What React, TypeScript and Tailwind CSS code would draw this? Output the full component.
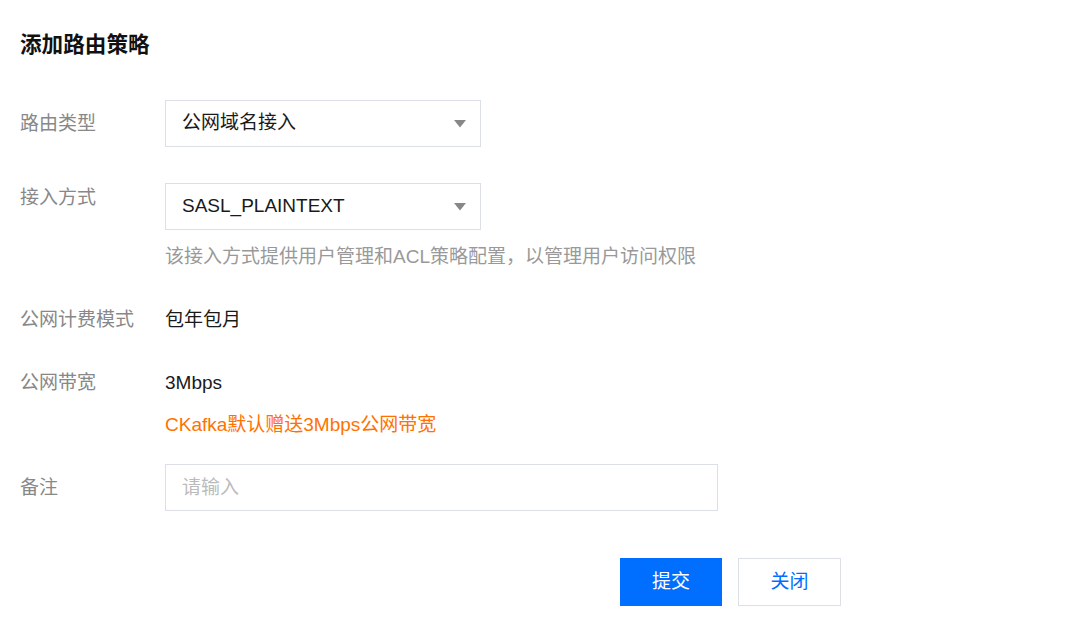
import { FC, ReactNode } from 'react';

const font = { fontFamily: '"Liberation Sans", "Noto Sans CJK SC", sans-serif' };

interface RowProps {
  label: string;
  labelClass: string;
  className?: string;
  children: ReactNode;
}

const Row: FC<RowProps> = ({ label, labelClass, className = '', children }) => (
  <div className={`flex items-start ${className}`}>
    <div className={`w-[145px] shrink-0 text-[19px] text-[#888888] ${labelClass}`}>{label}</div>
    <div className="flex flex-col">{children}</div>
  </div>
);

const Caret: FC = () => (
  <svg width="12" height="8" viewBox="0 0 12 8" className="shrink-0">
    <polygon points="0,0 12,0 6,7.5" fill="#888888" />
  </svg>
);

const SelectBox: FC<{ value: string }> = ({ value }) => (
  <div className="flex h-[47px] w-[316px] items-center justify-between border border-[#dcdfe6] bg-white pl-[16px] pr-[14px]">
    <span className="text-[19px] text-[#1a1a1a]">{value}</span>
    <Caret />
  </div>
);

export default function App() {
  return (
    <div className="min-h-[629px] w-[1080px] bg-white pl-[20px]" style={font}>
      <div className="pt-[30px]">
        <h2 className="text-[21.6px] font-bold leading-[30px] text-[#111111]">添加路由策略</h2>
      </div>

      <Row label="路由类型" labelClass="leading-[47px]" className="mt-[40px]">
        <SelectBox value="公网域名接入" />
      </Row>

      <Row label="接入方式" labelClass="leading-[30px]" className="mt-[36px]">
        <SelectBox value="SASL_PLAINTEXT" />
        <p className="mt-[12px] text-[19px] leading-[30px] text-[#999999]">
          该接入方式提供用户管理和ACL策略配置，以管理用户访问权限
        </p>
      </Row>

      <Row label="公网计费模式" labelClass="leading-[30px]" className="mt-[33px]">
        <span className="text-[19px] leading-[30px] text-[#1a1a1a]">包年包月</span>
      </Row>

      <Row label="公网带宽" labelClass="leading-[30px]" className="mt-[33px]">
        <span className="text-[19px] leading-[30px] text-[#1a1a1a]">3Mbps</span>
        <span className="mt-[12px] text-[19px] leading-[30px] text-[#ff7200]">CKafka默认赠送3Mbps公网带宽</span>
      </Row>

      <Row label="备注" labelClass="leading-[47px]" className="mt-[24px]">
        <input
          placeholder="请输入"
          className="h-[47px] w-[553px] border border-[#dcdfe6] px-[16px] text-[19px] text-[#1a1a1a] outline-none placeholder:text-[#bbbbbb]"
          style={font}
        />
      </Row>

      <div className="mt-[47px] flex gap-[16px] pl-[600px]">
        <button className="h-[48px] w-[102px] bg-[#006eff] text-[19px] text-white" style={font}>
          提交
        </button>
        <button
          className="h-[48px] w-[103px] border border-[#dcdfe6] bg-white text-[19px] text-[#006eff]"
          style={font}
        >
          关闭
        </button>
      </div>
    </div>
  );
}
